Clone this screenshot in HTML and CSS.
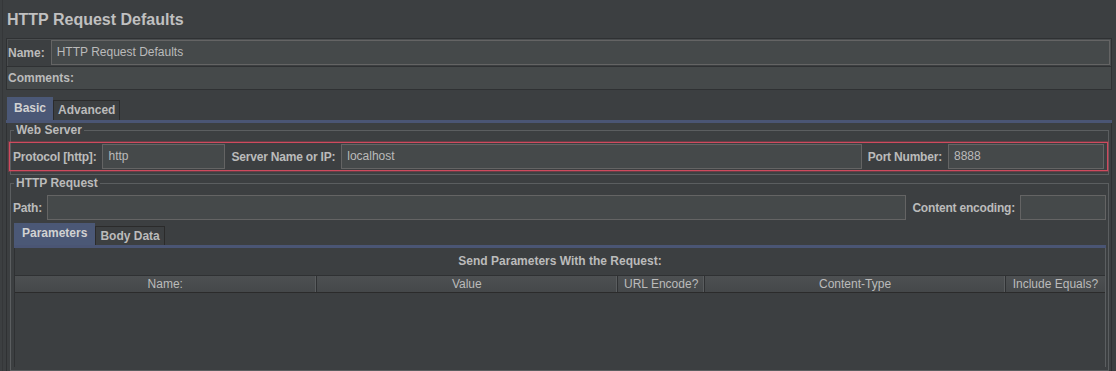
FILE: index.html
```html
<!DOCTYPE html>
<html>
<head>
<meta charset="utf-8">
<title>HTTP Request Defaults</title>
<link rel="stylesheet" href="styles.css">
</head>
<body>
<div class="app">
  <h1 class="title">HTTP Request Defaults</h1>
  <div class="namepanel">
    <div class="name-row">
      <label class="lbl">Name:</label>
      <div class="field name-field">HTTP Request Defaults</div>
    </div>
    <div class="comments-row">
      <label class="lbl">Comments:</label>
    </div>
  </div>

  <div class="tabs outer-tabs">
    <div class="tab active">Basic</div>
    <div class="tab">Advanced</div>
  </div>
  <div class="tabline outer-line"></div>

  <div class="tabbody">
    <fieldset class="group">
      <legend>Web Server</legend>
      <div class="form-row highlight">
        <label class="lbl">Protocol [http]:</label>
        <div class="field protocol-field">http</div>
        <label class="lbl gap">Server Name or IP:</label>
        <div class="field grow">localhost</div>
        <label class="lbl gap">Port Number:</label>
        <div class="field port-field">8888</div>
      </div>
    </fieldset>

    <fieldset class="group http-group">
      <legend>HTTP Request</legend>
      <div class="form-row path-row">
        <label class="lbl">Path:</label>
        <div class="field grow"></div>
        <label class="lbl gap">Content encoding:</label>
        <div class="field enc-field"></div>
      </div>

      <div class="tabs inner-tabs">
        <div class="tab active">Parameters</div>
        <div class="tab">Body Data</div>
      </div>
      <div class="tabline inner-line"></div>

      <div class="params">
        <div class="params-title">Send Parameters With the Request:</div>
        <div class="table">
          <div class="thead">
            <div class="th">Name:</div>
            <div class="th">Value</div>
            <div class="th">URL Encode?</div>
            <div class="th">Content-Type</div>
            <div class="th">Include Equals?</div>
          </div>
          <div class="tbody"></div>
        </div>
      </div>
    </fieldset>
  </div>
</div>
</body>
</html>
```

FILE: styles.css
```css
html, body {
  margin: 0;
  padding: 0;
  height: 371px;
  overflow: hidden;
  background: #3c3f41;
}

body {
  font-family: "Liberation Sans", Arial, sans-serif;
  font-size: 12px;
  color: #bbbbbb;
}

.app {
  height: 371px;
  display: flex;
  flex-direction: column;
  border-left: 1px solid #353739;
  margin-left: 2px;
}

.title {
  margin: 0;
  padding: 10px 0 8px 4px;
  font-size: 16px;
  line-height: 20px;
  font-weight: bold;
  color: #c0c0c0;
}

.namepanel {
  margin: 0 4px 0 3px;
  border: 1px solid #2f3133;
  box-shadow: inset 0 0 0 1px #4a4d4f;
}

.name-row {
  display: flex;
  align-items: center;
  height: 27px;
  padding: 0 1px;
}

.lbl {
  font-weight: bold;
  white-space: nowrap;
  color: #bbbbbb;
}

.field {
  box-sizing: border-box;
  height: 25px;
  line-height: 23px;
  background: #45494a;
  border: 1px solid #646464;
  padding: 0 5px;
  color: #bbbbbb;
  white-space: nowrap;
  overflow: hidden;
}

.name-field {
  flex: 1;
  margin-left: 4px;
}

.comments-row {
  display: flex;
  align-items: center;
  height: 22px;
  padding: 0 1px;
  background: #45494a;
  border-top: 1px solid #2f3133;
}

.tabs {
  display: flex;
  align-items: flex-end;
}

.outer-tabs {
  margin: 7px 0 0 4px;
  height: 23px;
}

.tab {
  box-sizing: border-box;
  height: 20px;
  line-height: 19px;
  padding: 0 4px;
  border: 1px solid #2b2b2b;
  border-bottom: none;
  font-weight: bold;
  color: #bbbbbb;
  background: #3c3f41;
}

.tab.active {
  height: 23px;
  line-height: 20px;
  padding: 0 6px;
  background: #4b5876;
  border-color: #4b5876;
  color: #d2d2d2;
}

.tabline {
  height: 3px;
  background: #4a5574;
}

.outer-line {
  margin: 0 4px 0 3px;
}

.tabbody {
  flex: 1;
  display: flex;
  flex-direction: column;
  margin: 0 4px 0 3px;
  padding: 0 2px 0 3px;
  border-left: 1px solid #2f3133;
  border-right: 1px solid #2f3133;
  min-height: 0;
}

.group {
  margin: 0;
  padding: 0 2px 3px;
  border: 1px solid #5b5e60;
  min-width: 0;
}

.group legend {
  margin-left: 1px;
  padding: 0 2px;
  line-height: 14px;
  font-weight: bold;
  color: #bbbbbb;
}

.form-row {
  display: flex;
  align-items: center;
}

.form-row .lbl {
  letter-spacing: -0.2px;
}

.gap {
  margin-left: 6px;
}

.lbl + .field {
  margin-left: 6px;
}

.highlight {
  box-sizing: border-box;
  height: 29px;
  margin: 5px -2px 0 -4px;
  padding: 0 3px;
  border: 1px solid #cf4a5e;
  box-shadow: 0 0 0 1px rgba(190, 60, 80, 0.35);
}

.protocol-field {
  width: 123px;
}

.grow {
  flex: 1;
  min-width: 0;
}

.port-field {
  width: 156px;
}

.http-group {
  flex: 1;
  margin-top: 1px;
  display: flex;
  flex-direction: column;
  min-height: 0;
}

.path-row {
  margin-top: 5px;
}

.path-row .lbl + .field {
  margin-left: 5px;
}

.enc-field {
  width: 86px;
}

.inner-tabs {
  margin: 3px 0 0 1px;
  height: 22px;
}

.inner-tabs .tab {
  height: 19px;
  line-height: 18px;
}

.inner-tabs .tab.active {
  height: 22px;
  line-height: 19px;
  padding: 0 7px;
}

.inner-line {
  margin-left: 1px;
}

.params {
  flex: 1;
  margin-left: 1px;
  border-left: 1px solid #2f3133;
  border-right: 1px solid #5b5e60;
  display: flex;
  flex-direction: column;
}

.params-title {
  padding-top: 6px;
  line-height: 14px;
  text-align: center;
  font-weight: bold;
}

.table {
  flex: 1;
  margin-top: 7px;
  display: flex;
  flex-direction: column;
}

.thead {
  display: grid;
  grid-template-columns: 301fr 301fr 87fr 300fr 99fr;
  height: 18px;
  box-sizing: border-box;
  background: linear-gradient(#4d5052, #45484a);
  border-top: 1px solid #2f3133;
  border-bottom: 1px solid #2b2b2b;
}

.th {
  line-height: 17px;
  text-align: center;
  color: #bbbbbb;
  border-right: 1px solid #2f3133;
  box-shadow: inset -1px 0 0 #5a5d5f;
  white-space: nowrap;
  overflow: hidden;
}

.th:last-child {
  border-right: none;
  box-shadow: none;
}

.tbody {
  flex: 1;
  background: #3c3f41;
}
```
